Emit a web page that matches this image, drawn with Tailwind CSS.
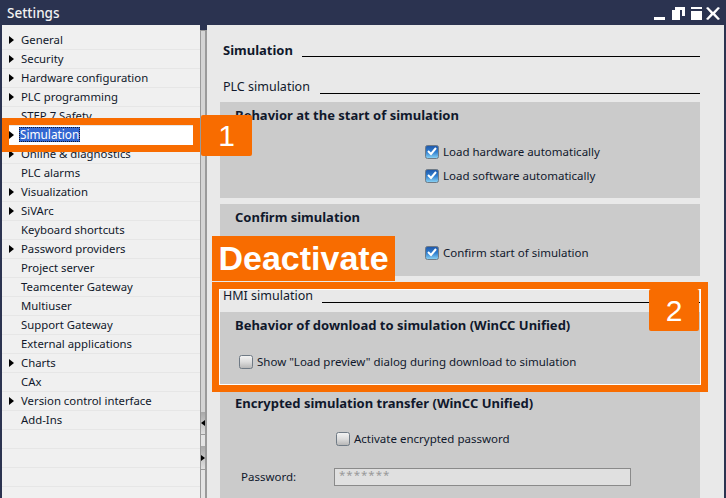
<!DOCTYPE html>
<html lang="en">
<head>
<meta charset="UTF-8" />
<title>Settings</title>
<script src="https://cdn.jsdelivr.net/npm/@tailwindcss/browser@4"></script>
</head>
<body class="m-0 overflow-hidden">
<svg width="0" height="0" class="absolute">
  <defs>
    <linearGradient id="off" x1="0" y1="0" x2="0" y2="1"><stop offset="0" stop-color="#f4f4f4"/><stop offset="0.500" stop-color="#dcdcdc"/><stop offset="1" stop-color="#b4b4b4"/></linearGradient>
    <linearGradient id="on" x1="0" y1="0" x2="0" y2="1"><stop offset="0" stop-color="#1f56a8"/><stop offset="0.500" stop-color="#2f7fd0"/><stop offset="1" stop-color="#8fd6f5"/></linearGradient>
  </defs>
</svg>
<div class="relative w-[726px] h-[498px] overflow-hidden flex flex-col bg-[#2b3350] font-['Noto_Sans',sans-serif] text-[11.5px] text-[#10182b]">
  <!-- title bar -->
  <div class="h-[25px] flex items-center justify-between pl-[7px] pr-[6px] shrink-0">
    <span class="text-[13.500px] font-medium text-[#f2f2f2] mt-[1px]">Settings</span>
    <svg width="66" height="14" viewBox="0 0 66 14" class="fill-white">
      <rect x="0" y="11" width="11" height="3"/>
      <path d="M18 4h8v10h-8z M21 1h10v9h-3V4h-7z"/>
      <path d="M37 1h11v2H37z M37 5h11v9H37z"/>
      <path d="M54 1l5 5 5-5 2 1-5 5.500 5 5.500-2 1-5-5-5 5-2-1 5-5.500-5-5.500z"/>
    </svg>
  </div>
  <div class="flex flex-1 min-h-0 pl-[2px] pr-[2px]">
    <!-- nav tree -->
    <div class="w-[198px] bg-[#f0f0f0] pt-[6px] shrink-0 text-[11.350px]">
      <div class="h-[19px] border-b border-[#e6e6e6] flex items-center"><svg class="ml-[7px] mr-[7px]" width="5" height="8"><path d="M0 0l5 4-5 4z"/></svg><span>General</span></div>
      <div class="h-[19px] border-b border-[#e6e6e6] flex items-center"><svg class="ml-[7px] mr-[7px]" width="5" height="8"><path d="M0 0l5 4-5 4z"/></svg><span>Security</span></div>
      <div class="h-[19px] border-b border-[#e6e6e6] flex items-center"><svg class="ml-[7px] mr-[7px]" width="5" height="8"><path d="M0 0l5 4-5 4z"/></svg><span>Hardware configuration</span></div>
      <div class="h-[19px] border-b border-[#e6e6e6] flex items-center"><svg class="ml-[7px] mr-[7px]" width="5" height="8"><path d="M0 0l5 4-5 4z"/></svg><span>PLC programming</span></div>
      <div class="h-[19px] border-b border-[#e6e6e6] flex items-center pl-[19px]">STEP 7 Safety</div>
      <div class="h-[19px] bg-white flex items-center pb-[2px]"><svg class="ml-[7px] mr-[5px]" width="5" height="8"><path d="M0 0l5 4-5 4z"/></svg><span class="bg-[#3367d1] text-white leading-[15px] px-[1px] text-[11.800px] outline-1 outline-dotted outline-[#10182b] -outline-offset-1">Simulation</span></div>
      <div class="h-[19px] border-b border-[#e6e6e6] flex items-center"><svg class="ml-[7px] mr-[7px]" width="5" height="8"><path d="M0 0l5 4-5 4z"/></svg><span>Online &amp; diagnostics</span></div>
      <div class="h-[19px] border-b border-[#e6e6e6] flex items-center pl-[19px]">PLC alarms</div>
      <div class="h-[19px] border-b border-[#e6e6e6] flex items-center"><svg class="ml-[7px] mr-[7px]" width="5" height="8"><path d="M0 0l5 4-5 4z"/></svg><span>Visualization</span></div>
      <div class="h-[19px] border-b border-[#e6e6e6] flex items-center"><svg class="ml-[7px] mr-[7px]" width="5" height="8"><path d="M0 0l5 4-5 4z"/></svg><span>SiVArc</span></div>
      <div class="h-[19px] border-b border-[#e6e6e6] flex items-center pl-[19px]">Keyboard shortcuts</div>
      <div class="h-[19px] border-b border-[#e6e6e6] flex items-center"><svg class="ml-[7px] mr-[7px]" width="5" height="8"><path d="M0 0l5 4-5 4z"/></svg><span>Password providers</span></div>
      <div class="h-[19px] border-b border-[#e6e6e6] flex items-center pl-[19px]">Project server</div>
      <div class="h-[19px] border-b border-[#e6e6e6] flex items-center pl-[19px]">Teamcenter Gateway</div>
      <div class="h-[19px] border-b border-[#e6e6e6] flex items-center pl-[19px]">Multiuser</div>
      <div class="h-[19px] border-b border-[#e6e6e6] flex items-center pl-[19px]">Support Gateway</div>
      <div class="h-[19px] border-b border-[#e6e6e6] flex items-center pl-[19px]">External applications</div>
      <div class="h-[19px] border-b border-[#e6e6e6] flex items-center"><svg class="ml-[7px] mr-[7px]" width="5" height="8"><path d="M0 0l5 4-5 4z"/></svg><span>Charts</span></div>
      <div class="h-[19px] border-b border-[#e6e6e6] flex items-center pl-[19px]">CAx</div>
      <div class="h-[19px] border-b border-[#e6e6e6] flex items-center"><svg class="ml-[7px] mr-[7px]" width="5" height="8"><path d="M0 0l5 4-5 4z"/></svg><span>Version control interface</span></div>
      <div class="h-[19px] border-b border-[#e6e6e6] flex items-center pl-[19px]">Add-Ins</div>
      <div class="h-[19px] border-b border-[#e6e6e6]"></div>
      <div class="h-[19px] border-b border-[#e6e6e6]"></div>
      <div class="h-[19px] border-b border-[#e6e6e6]"></div>
    </div>
    <!-- splitter -->
    <div class="w-[7px] shrink-0 bg-[#e4e4e4] border-l border-r-2 border-[#9a9a9a] flex flex-col mt-[5px]">
      <div class="h-[382px] border-t border-[#9a9a9a] bg-[#d4d4d4]"></div>
      <div class="h-[23px] bg-gradient-to-b from-[#a8a8a8] to-[#e0e0e0] border-b border-[#9a9a9a] flex items-center"><svg width="4" height="6"><path d="M4 0v6L0 3z"/></svg></div>
      <div class="h-[11px]"></div>
      <div class="h-[24px] bg-gradient-to-b from-[#a8a8a8] to-[#e0e0e0] border-b border-[#9a9a9a] flex items-center"><svg width="4" height="6"><path d="M0 0v6l4-3z"/></svg></div>
    </div>
    <!-- settings content -->
    <div class="flex-1 min-w-0 bg-[#e9e9e9] pl-[13px] pr-[24px]">
      <div class="flex items-end mt-[16px] h-[18px] pl-[3px]">
        <span class="text-[13px] font-bold leading-[18px]">Simulation</span>
        <div class="flex-1 border-b border-black ml-[9px] mb-[2px]"></div>
      </div>
      <div class="flex items-end mt-[19px] h-[18px] pl-[3px]">
        <span class="text-[12.500px] leading-[18px]">PLC simulation</span>
        <div class="flex-1 border-b border-black ml-[10px] mb-[2px]"></div>
      </div>
      <div class="mt-[6px] h-[96px] bg-[#cbcbcb] pl-[15px] pt-[4px]">
        <div class="text-[13px] font-bold h-[18px] leading-[18px]">Behavior at the start of simulation</div>
        <div class="mt-[21px] ml-[190px] flex items-center h-[14px]">
          <svg class="mr-[4px] shrink-0" width="14" height="14" viewBox="0 0 14 14"><rect x="0.500" y="0.500" width="13" height="13" rx="2" fill="url(#on)" stroke="#6f7a85"/><path d="M3 6l3 3 5-6" fill="none" stroke="#fff" stroke-width="2"/></svg>
          <span>Load hardware automatically</span>
        </div>
        <div class="mt-[10px] ml-[190px] flex items-center h-[14px]">
          <svg class="mr-[4px] shrink-0" width="14" height="14" viewBox="0 0 14 14"><rect x="0.500" y="0.500" width="13" height="13" rx="2" fill="url(#on)" stroke="#6f7a85"/><path d="M3 6l3 3 5-6" fill="none" stroke="#fff" stroke-width="2"/></svg>
          <span>Load software automatically</span>
        </div>
      </div>
      <div class="mt-[6px] h-[72px] bg-[#cbcbcb] pl-[15px] pt-[4px]">
        <div class="text-[13px] font-bold h-[18px] leading-[18px]">Confirm simulation</div>
        <div class="mt-[20px] ml-[190px] flex items-center h-[14px]">
          <svg class="mr-[4px] shrink-0" width="14" height="14" viewBox="0 0 14 14"><rect x="0.500" y="0.500" width="13" height="13" rx="2" fill="url(#on)" stroke="#6f7a85"/><path d="M3 6l3 3 5-6" fill="none" stroke="#fff" stroke-width="2"/></svg>
          <span>Confirm start of simulation</span>
        </div>
      </div>
      <div class="flex items-end mt-[11px] h-[18px] pl-[3px]">
        <span class="text-[12.500px] leading-[18px]">HMI simulation</span>
        <div class="flex-1 border-b border-black ml-[9px] mb-[2px]"></div>
      </div>
      <div class="mt-[7px] h-[73px] bg-[#cbcbcb] pl-[15px] pt-[4px]">
        <div class="text-[13px] font-bold h-[18px] leading-[18px]">Behavior of download to simulation (WinCC Unified)</div>
        <div class="mt-[21px] ml-[4px] flex items-center h-[14px]">
          <svg class="mr-[4px] shrink-0" width="14" height="14" viewBox="0 0 14 14"><rect x="0.500" y="0.500" width="13" height="13" rx="2" fill="url(#off)" stroke="#6f7a85"/></svg>
          <span>Show "Load preview" dialog during download to simulation</span>
        </div>
      </div>
      <div class="mt-[7px] h-[120px] bg-[#cbcbcb] pl-[15px] pt-[2px]">
        <div class="text-[13px] font-bold h-[18px] leading-[18px]">Encrypted simulation transfer (WinCC Unified)</div>
        <div class="mt-[20px] ml-[101px] flex items-center h-[14px]">
          <svg class="mr-[4px] shrink-0" width="14" height="14" viewBox="0 0 14 14"><rect x="0.500" y="0.500" width="13" height="13" rx="2" fill="url(#off)" stroke="#6f7a85"/></svg>
          <span>Activate encrypted password</span>
        </div>
        <div class="mt-[22px] flex items-center h-[18px] ml-[6px]">
          <span class="w-[93px]">Password:</span>
          <div class="w-[297px] h-[18px] bg-[#e0e0e0] border border-[#8a8a8a] pl-[4px] leading-[12px] text-[#999] tracking-[1px]">*******</div>
        </div>
      </div>
    </div>
  </div>

  <!-- annotations -->
  <div class="absolute left-[2px] top-[118px] w-[198px] h-[34px] border-[7px] border-[#f86c00]"></div>
  <div class="absolute left-[201px] top-[115px] w-[51px] h-[41px] rounded-[2px] bg-[#f86c00] text-white text-[30px] flex items-center justify-center font-['Liberation_Sans',sans-serif]">1</div>
  <div class="absolute left-[212px] top-[236px] w-[183px] h-[45px] bg-[#f86c00] text-white text-[34px] font-bold flex items-center justify-center font-['Liberation_Sans',sans-serif]">Deactivate</div>
  <div class="absolute left-[212px] top-[282px] w-[496px] h-[110px] border-[7px] border-[#f86c00] shadow-[inset_0_0_0_1px_#fff]"></div>
  <div class="absolute left-[649px] top-[289px] w-[50px] h-[42px] rounded-[2px] bg-[#f86c00] text-white text-[30px] flex items-center justify-center font-['Liberation_Sans',sans-serif]">2</div>
</div>
</body>
</html>
